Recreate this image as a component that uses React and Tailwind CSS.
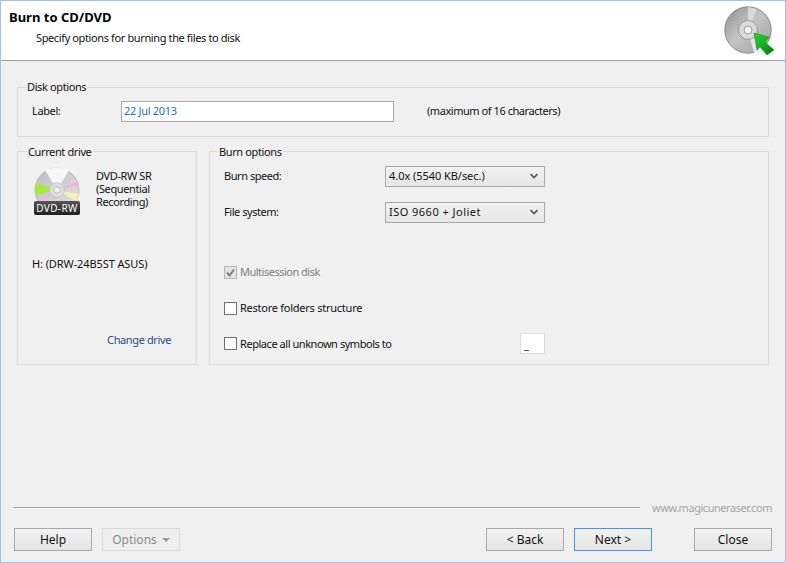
const font = { fontFamily: '"Noto Sans", sans-serif' };

function Btn({ children, className = "" }) {
  return (
    <button className={`w-[78px] h-[23px] border bg-gradient-to-b from-[#f2f2f2] to-[#e5e5e5] text-[12px] tracking-normal flex items-center justify-center ${className}`}>
      {children}
    </button>
  );
}

function Check({ checked, disabled }) {
  return (
    <span className={`w-[13px] h-[13px] border flex items-center justify-center shrink-0 ${disabled ? "border-[#b8b8b8] bg-[#e4e4e4]" : "border-[#707070] bg-white"}`}>
      {checked && (
        <svg width="11" height="11" viewBox="0 0 11 11">
          <path d="M2 5.5 L4.5 8.5 L9 2.5" fill="none" stroke="#7f7f7f" strokeWidth="2" />
        </svg>
      )}
    </span>
  );
}

function Select({ value, className = "" }) {
  return (
    <div className="w-[160px] h-[21px] border border-[#a9a9a9] bg-gradient-to-b from-[#f1f1f1] to-[#e6e6e6] flex items-center justify-between pl-[2px] pr-[6px] pb-px text-[#111]">
      <span className={className}>{value}</span>
      <svg width="8" height="6" viewBox="0 0 8 6">
        <path d="M0.5 1 L4 4.5 L7.5 1" fill="none" stroke="#555" strokeWidth="1.6" />
      </svg>
    </div>
  );
}

function Row({ label, className = "", children }) {
  return (
    <div className={`flex items-center ${className}`}>
      <span className="w-[161px] text-[#111] pb-px tracking-[-0.45px]">{label}</span>
      {children}
    </div>
  );
}

function CheckRow({ checked, disabled, children, className = "", textClass = "" }) {
  return (
    <div className={`flex items-center gap-[3px] ${disabled ? "text-[#7d7d7d]" : "text-[#111]"} ${className}`}>
      <Check checked={checked} disabled={disabled} />
      <span className={textClass}>{children}</span>
    </div>
  );
}

function HeaderDisc() {
  return (
    <svg width="54" height="52" viewBox="0 0 54 52">
      <defs>
        <linearGradient id="hd" x1="0.1" y1="0.1" x2="0.9" y2="0.9">
          <stop offset="0" stopColor="#9a9a9a" />
          <stop offset="0.45" stopColor="#c4c4c4" />
          <stop offset="1" stopColor="#a8a8a8" />
        </linearGradient>
        <linearGradient id="ha" x1="0" y1="0" x2="1" y2="1">
          <stop offset="0" stopColor="#35d42f" />
          <stop offset="0.6" stopColor="#0fa51a" />
          <stop offset="1" stopColor="#066d10" />
        </linearGradient>
      </defs>
      <circle cx="24" cy="24" r="23.2" fill="url(#hd)" stroke="#777" strokeWidth="0.8" />
      <path d="M24 24 L24 1 L33 3 Z" fill="#e2e2e2" opacity="0.8" />
      <path d="M24 24 L40 44 L30 47 Z" fill="#ececec" opacity="0.9" />
      <circle cx="24" cy="24" r="9.5" fill="#dadada" stroke="#8a8a8a" strokeWidth="0.8" />
      <circle cx="24" cy="24" r="4" fill="#f2f2f2" stroke="#8a8a8a" strokeWidth="0.8" />
      <path d="M30 27 L45 31 L41 36 L50 44 L43 49 L36 41 L33 44 Z" fill="url(#ha)" stroke="#0a8a14" strokeWidth="0.5" />
    </svg>
  );
}

function DriveDisc() {
  return (
    <svg width="46" height="46" viewBox="0 0 46 46">
      <defs>
        <linearGradient id="dd" x1="0" y1="0" x2="1" y2="1">
          <stop offset="0" stopColor="#bdbdbd" />
          <stop offset="0.5" stopColor="#d0d0d0" />
          <stop offset="1" stopColor="#e2e2e2" />
        </linearGradient>
      </defs>
      <circle cx="23" cy="23" r="22" fill="url(#dd)" stroke="#a8a8a8" strokeWidth="0.6" />
      <path d="M23 23 L11 3 Q23 -2 35 3 Z" fill="#f7f7f7" />
      <path d="M23 23 L2 16 Q0.5 21 1.5 28 Z" fill="#a7e83c" />
      <path d="M23 23 L44 14 L45 18 Z" fill="#f0b6d2" />
      <path d="M23 23 L44.5 27 L42 34 Z" fill="#f7f1b4" />
      <path d="M23 23 L5 33 L7 36 Z" fill="#eeb6d8" />
      <circle cx="23" cy="23" r="7.5" fill="#dcdcdc" stroke="#bdbdbd" strokeWidth="0.6" />
      <circle cx="23" cy="23" r="3" fill="#f4f4f4" stroke="#aaa" strokeWidth="0.6" />
    </svg>
  );
}

export default function App() {
  return (
    <div style={font} className="w-[786px] h-[563px] bg-[#f0f0f0] border border-[#9fc5e3] flex flex-col text-[11px] tracking-[-0.38px] leading-[16px] overflow-hidden">
      <header className="h-[60px] shrink-0 bg-white border-b border-[#a0a0a0] flex justify-between pl-2">
        <div>
          <h1 className="font-bold text-[13px] tracking-normal leading-[16px] text-black mt-[8px]">Burn to CD/DVD</h1>
          <p className="text-[#111] ml-[27px] mt-[5px]">Specify options for burning the files to disk</p>
        </div>
        <div className="mt-[5px] mr-[7px]">
          <HeaderDisc />
        </div>
      </header>

      <main className="flex-1 flex flex-col px-4 pt-[18px]">
        <fieldset className="h-[58px] border border-[#dcdcdc] px-[9px] w-[752px]">
          <legend className="px-[1px] ml-[-1px] text-[#111]">Disk options</legend>
          <div className="flex items-center mt-[6px]">
            <span className="w-[89px] ml-[5px] pb-px text-[#111]">Label:</span>
            <div className="w-[273px] h-[21px] bg-white border border-[#a9a9a9] flex items-center pl-[2px] pb-px text-[#1e6fd0] tracking-[-0.3px]">22 Jul 2013</div>
            <span className="ml-[33px] pb-px text-[#111] tracking-[-0.45px]">(maximum of 16 characters)</span>
          </div>
        </fieldset>

        <div className="flex gap-[12px] mt-[5px]">
          <fieldset className="h-[223px] w-[180px] border border-[#dcdcdc] px-[14px] relative">
            <legend className="px-[1px] pt-[2px] ml-[-5px] text-[#111]">Current drive</legend>
            <div className="flex mt-[7px]">
              <div className="relative w-[46px] h-[48px] shrink-0 ml-[2px]">
                <DriveDisc />
                <div className="absolute left-0 top-[34px] w-[46px] h-[14px] bg-gradient-to-b from-[#555] to-[#222] rounded-[2px] text-white text-[10px] leading-[14px] text-center tracking-[0.4px]">DVD-RW</div>
              </div>
              <p className="ml-[16px] text-[#111] leading-[13px] mt-[2px] w-[64px]">DVD-RW SR (Sequential Recording)</p>
            </div>
            <p className="mt-[41px] text-[#111] tracking-[-0.1px]">H: (DRW-24B5ST ASUS)</p>
            <p className="mt-[60px] text-right text-[#1f4f82] mr-[11px]">Change drive</p>
          </fieldset>

          <fieldset className="h-[223px] flex-1 border border-[#dcdcdc] px-[14px]">
            <legend className="px-[1px] pt-[2px] ml-[-6px] text-[#111]">Burn options</legend>
            <Row label="Burn speed:" className="mt-[6px]"><Select value="4.0x (5540 KB/sec.)" className="tracking-[-0.05px] ml-px" /></Row>
            <Row label="File system:" className="mt-[15px]"><Select value="ISO 9660 + Joliet" className="tracking-[0.47px] ml-px" /></Row>
            <CheckRow checked disabled className="mt-[41px]" textClass="tracking-[-0.5px]">Multisession disk</CheckRow>
            <CheckRow className="mt-[20px]" textClass="tracking-[-0.25px]">Restore folders structure</CheckRow>
            <div className="flex items-center justify-between w-[321px] mt-[17px]">
              <CheckRow textClass="tracking-[-0.45px]">Replace all unknown symbols to</CheckRow>
              <div className="w-[25px] h-[21px] bg-white border border-[#dcdcdc] pl-[3px] text-[#111] leading-[22px]">_</div>
            </div>
          </fieldset>
        </div>
      </main>

      <div className="flex items-center pl-3 pr-[13px] mb-[12px]">
        <div className="flex-1 h-[2px] border-t border-[#a0a0a0] bg-white"></div>
        <span className="ml-3 text-[11px] text-[#a4a4a4] tracking-[-0.45px]">www.magicuneraser.com</span>
      </div>

      <footer className="flex items-center pl-[13px] pr-[13px] pb-[11px]">
        <Btn className="border-[#a9a9a9] text-[#111]">Help</Btn>
        <Btn className="ml-[10px] border-[#d9d9d9] text-[#8a8a8a] !bg-none bg-[#efefef] gap-[5px]">
          Options
          <svg width="8" height="4" viewBox="0 0 8 4"><path d="M0 0 H8 L4 4 Z" fill="#9a9a9a" /></svg>
        </Btn>
        <div className="flex-1"></div>
        <Btn className="border-[#a9a9a9] text-[#111]">&lt; Back</Btn>
        <Btn className="ml-[10px] border-[#3f95e8] text-[#111]">Next &gt;</Btn>
        <Btn className="ml-[42px] border-[#a9a9a9] text-[#111]">Close</Btn>
      </footer>
    </div>
  );
}
